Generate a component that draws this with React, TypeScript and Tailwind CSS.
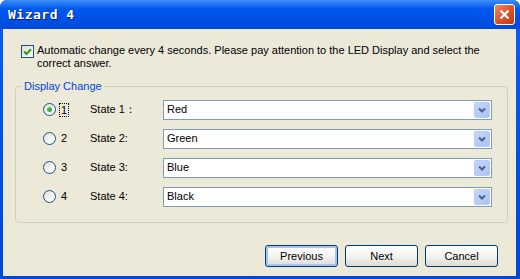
import React from 'react'

const rows = [
  { n: '1', label: 'State 1：', value: 'Red', checked: true },
  { n: '2', label: 'State 2:', value: 'Green' },
  { n: '3', label: 'State 3:', value: 'Blue' },
  { n: '4', label: 'State 4:', value: 'Black' },
]

function Radio({ checked }: { checked?: boolean }) {
  return (
    <span className="flex h-[13px] w-[13px] items-center justify-center rounded-full border border-[#1C5180] bg-gradient-to-br from-[#DCDCD7] via-[#F4F4F0] to-white">
      {checked && <span className="h-[5px] w-[5px] rounded-full bg-gradient-to-br from-[#55D551] to-[#21A121]" />}
    </span>
  )
}

function Combo({ value }: { value: string }) {
  return (
    <div className="flex h-[20px] w-[329px] items-center justify-between border border-[#7F9DB9] bg-white pl-[3px] pr-px">
      <span>{value}</span>
      <span className="flex h-[16px] w-[16px] items-center justify-center rounded-[2px] border border-[#B9CBF3] bg-gradient-to-br from-[#C6D6FB] to-[#A9C2F6]">
        <svg width="8" height="6" viewBox="0 0 8 6">
          <path d="M1 1.5 L4 4.5 L7 1.5" fill="none" stroke="#4D6185" strokeWidth="2" />
        </svg>
      </span>
    </div>
  )
}

function Button({ children, focused }: { children: React.ReactNode; focused?: boolean }) {
  return (
    <button
      className={`flex h-[22px] w-[73px] items-center justify-center rounded-[3px] border border-[#003C74] bg-gradient-to-b from-white via-[#F4F4F0] to-[#DCDBD4] ${
        focused ? 'shadow-[inset_0_0_0_2px_#A8C4EE]' : ''
      }`}
    >
      {children}
    </button>
  )
}

export default function App() {
  return (
    <div
      className="flex h-[279px] w-[520px] flex-col overflow-hidden rounded-t-[7px] bg-gradient-to-b from-[#0A5FEF] to-[#0046D5] text-[11px] text-black"
      style={{ fontFamily: 'Tahoma, "Liberation Sans", sans-serif' }}
    >
      <div className="flex h-[29px] shrink-0 items-center justify-between bg-gradient-to-b from-[#3B8DF7] via-[#0058EE] via-30% to-[#0048DC] pl-[8px] pr-[5px]">
        <span
          className="text-[13px] font-bold tracking-[0.5px] text-white [text-shadow:1px_1px_0_#0A1E6B]"
          style={{ fontFamily: '"DejaVu Sans Mono", monospace' }}
        >
          Wizard 4
        </span>
        <span className="flex h-[21px] w-[21px] items-center justify-center rounded-[3px] border border-white bg-gradient-to-br from-[#E98A6B] via-[#E0532A] to-[#C23A12]">
          <svg width="11" height="11" viewBox="0 0 11 11">
            <path d="M1.5 1.5 L9.5 9.5 M9.5 1.5 L1.5 9.5" stroke="white" strokeWidth="2.2" />
          </svg>
        </span>
      </div>

      <div className="mb-[3px] ml-[3px] mr-[4px] flex flex-1 flex-col bg-[#ECE9D8] pt-[16px]">
        <div className="flex items-start pl-[18px] pr-[20px]">
          <span className="mr-[3px] flex h-[13px] w-[13px] shrink-0 items-center justify-center border border-[#1C5180] bg-gradient-to-br from-[#DCDCD7] to-white">
            <svg width="9" height="8" viewBox="0 0 9 8">
              <path d="M1 3.5 L3.5 6 L8 1.2" fill="none" stroke="#21A121" strokeWidth="2" />
            </svg>
          </span>
          <p className="-mt-[1px] max-w-[445px] leading-[13px]">
            Automatic change every 4 seconds. Please pay attention to the LED Display and select the correct answer.
          </p>
        </div>

        <fieldset className="mx-[12px] mr-[8px] mt-[8px] h-[145px] rounded-[4px] border border-[#D0D0BF] pl-[6px]">
          <legend className="px-[2px] text-[#0046D5]">Display Change</legend>
          <div className="flex flex-col gap-[9px] pt-[5px]">
            {rows.map((r) => (
              <div key={r.n} className="flex items-center">
                <span className="ml-[21px] flex w-[47px] items-center gap-[3px]">
                  <Radio checked={r.checked} />
                  <span className={r.checked ? 'border border-dotted border-black px-px leading-[12px]' : 'px-[2px]'}>{r.n}</span>
                </span>
                <span className="w-[73px]">{r.label}</span>
                <Combo value={r.value} />
              </div>
            ))}
          </div>
        </fieldset>

        <div className="mt-auto flex justify-end gap-[7px] pb-[9px] pr-[18px]">
          <Button focused>Previous</Button>
          <Button>Next</Button>
          <Button>Cancel</Button>
        </div>
      </div>
    </div>
  )
}
